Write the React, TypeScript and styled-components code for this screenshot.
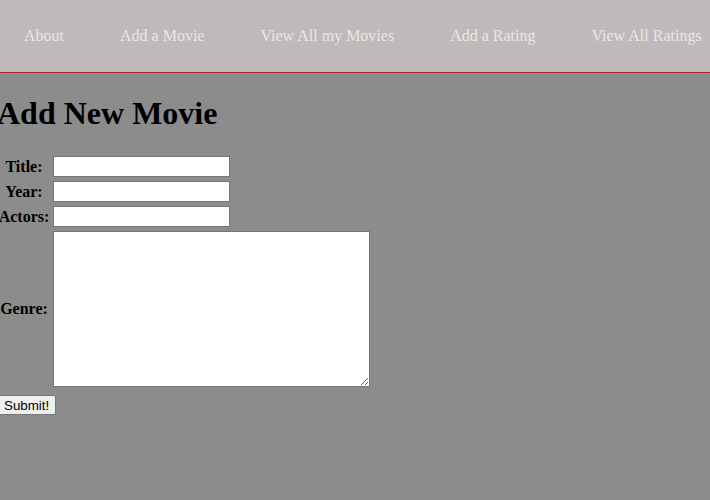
import React from "react";
import styled, { createGlobalStyle } from "styled-components";

const Global = createGlobalStyle`
  html, body { margin: 0; padding: 0; }
  body {
    background: #8c8c8c;
    font-family: "Liberation Serif", "Times New Roman", serif;
    font-size: 16px;
    color: #000;
    min-height: 500px;
    overflow: hidden;
  }
`;

const NavBar = styled.nav`
  height: 72px;
  background: #bfb9b9;
  border-bottom: 1px solid #b22222;
  display: flex;
  align-items: center;
  padding-left: 24px;
  gap: 56px;
  white-space: nowrap;
  overflow: hidden;
`;

const NavLink = styled.a`
  color: #e8e8e8;
  text-decoration: none;
  font-size: 16px;
  line-height: 20px;
  margin-top: 0;
`;

const Content = styled.main`
  margin-left: -3px;
`;

const Title = styled.h1`
  font-size: 32px;
  font-weight: bold;
  margin: 22px 0 24px 0;
  line-height: 37px;
`;

const Form = styled.form`
  display: flex;
  flex-direction: column;
  align-items: flex-start;
`;

const Grid = styled.div`
  display: grid;
  grid-template-columns: 46px auto;
  column-gap: 6px;
  row-gap: 4px;
  padding-left: 4px;
  align-items: center;
`;

const Label = styled.label`
  display: flex;
  justify-content: center;
  font-weight: bold;
  white-space: nowrap;
  font-size: 16px;
  line-height: 18px;
`;

const TextInput = styled.input`
  box-sizing: border-box;
  width: 177px;
  height: 21px;
  margin: 0;
  border: 1px solid #767676;
  background: #fff;
  padding: 1px 2px;
  font-family: "Liberation Sans", Arial, sans-serif;
  font-size: 13.33px;
`;

const TextArea = styled.textarea`
  box-sizing: border-box;
  width: 317px;
  height: 156px;
  margin: 0;
  border: 1px solid #767676;
  background: #fff;
  padding: 2px;
  font-family: "Liberation Mono", monospace;
  font-size: 13.33px;
`;

const Submit = styled.button`
  margin-top: 8px;
  box-sizing: border-box;
  height: 20px;
  padding: 1px 6px;
  font-family: "Liberation Sans", Arial, sans-serif;
  font-size: 13.33px;
  background: #efefef;
  color: #000;
  border: 1px solid #767676;
  border-radius: 2px;
  line-height: 15px;
`;

export default function App() {
  const links = ["About", "Add a Movie", "View All my Movies", "Add a Rating", "View All Ratings"];
  return (
    <>
      <Global />
      <NavBar>
        {links.map((l) => (
          <NavLink key={l} href="#">
            {l}
          </NavLink>
        ))}
      </NavBar>
      <Content>
        <Title>Add New Movie</Title>
        <Form onSubmit={(e) => e.preventDefault()}>
          <Grid>
            <Label htmlFor="title">Title:</Label>
            <TextInput id="title" type="text" />
            <Label htmlFor="year">Year:</Label>
            <TextInput id="year" type="text" />
            <Label htmlFor="actors">Actors:</Label>
            <TextInput id="actors" type="text" />
            <Label htmlFor="genre">Genre:</Label>
            <TextArea id="genre" />
          </Grid>
          <Submit type="submit">Submit!</Submit>
        </Form>
      </Content>
    </>
  );
}
